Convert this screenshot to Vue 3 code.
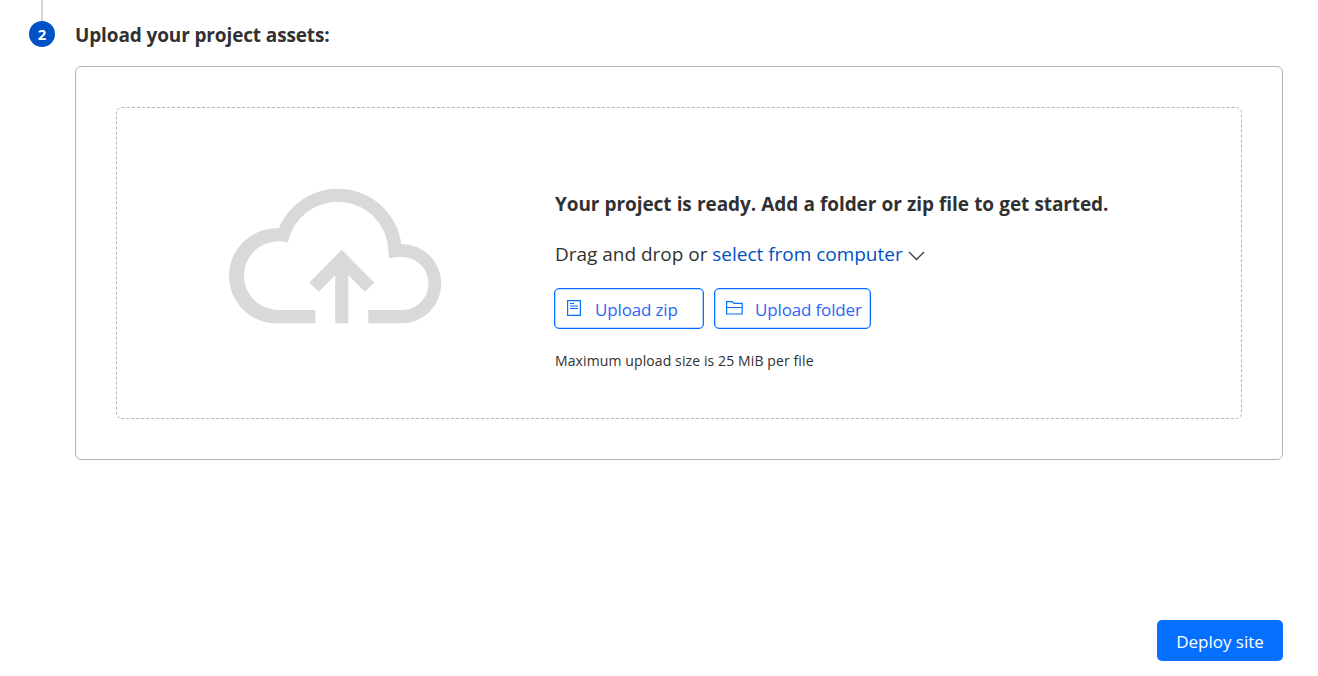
<script setup>
const headline = 'Your project is ready. Add a folder or zip file to get started.'
</script>

<template>
  <main class="page">
    <section class="step">
      <div class="rail">
        <span class="line"></span>
        <span class="badge">2</span>
      </div>
      <div class="body">
        <h2>Upload your project assets:</h2>
        <div class="panel">
          <div class="dropzone">
            <svg class="cloud" viewBox="229 188 213 136" width="213" height="136">
              <path d="M315.3 323.3H276.5A47.5 47.5 0 0 1 276.5 228.3L278.8 228.5A63.9 63.9 0 0 1 401.3 244A39.5 39.5 0 0 1 402 323.3H368.3V310H402A26.5 26.5 0 0 0 402 257Q395 257 389 258.3L388.5 252A50.75 50.75 0 0 0 288 242.5Q283 241.3 276.5 241.3A34.4 34.4 0 0 0 276.5 310H315.3Z" />
              <path d="M341.8 249.8L374.3 282.5L365 291.7L348.3 275.2V323.3H335.2V275.2L318.7 291.7L309.4 282.5Z" />
            </svg>
            <div class="info">
              <h3>{{ headline }}</h3>
              <p class="drag">
                <span>Drag and drop or <a>select from computer</a></span>
                <svg class="chev" width="17" height="10" viewBox="0 0 17 10"><path d="M1 1L8.5 8.5L16 1" /></svg>
              </p>
              <div class="buttons">
                <button class="outline zip">
                  <svg width="14" height="16" viewBox="0 0 14 16"><path d="M.6.6H13.4V15.4H.6ZM3 3.5H7M3 6H11M3 8.5H11" /></svg>
                  <span>Upload zip</span>
                </button>
                <button class="outline folder">
                  <svg width="17" height="15" viewBox="0 0 17 15"><path d="M.6 14V1.6H6.3L8 3.4H16.2V14ZM.6 7.5H16.2" /></svg>
                  <span>Upload folder</span>
                </button>
              </div>
              <p class="limit">Maximum upload size is 25 MiB per file</p>
            </div>
          </div>
        </div>
      </div>
    </section>
    <footer><button class="deploy">Deploy site</button></footer>
  </main>
</template>

<style>
body { background: #fff; }
</style>

<style scoped>
* { box-sizing: border-box; }
.page { width: 1318px; height: 676px; overflow: hidden; font-family: "Segoe UI", "Open Sans", "Noto Sans", sans-serif; color: #313131; }
h2, h3, p { margin: 0; white-space: nowrap; }
.step { display: flex; height: 460px; padding: 0 35px 0 29px; }
.rail { width: 46px; flex: none; }
.line { display: block; width: 2px; height: 21px; margin-left: 12px; background: #d5d7d8; }
.badge { display: block; width: 26px; height: 26px; border-radius: 50%; background: #0051c3; color: #fff; font-size: 15px; font-weight: 700; line-height: 27px; text-align: center; }
.body { flex: 1; min-width: 0; }
h2 { height: 66px; padding-top: 21px; font-size: 19px; line-height: 28px; letter-spacing: -.13px; }
.panel { height: 394px; padding: 40px; border: 1px solid #b6b6b6; border-radius: 6px; }
.dropzone { display: flex; height: 312px; border: 1px dashed #b6b6b6; border-radius: 6px; }
.cloud { flex: none; margin: 80px 112px 0; fill: #d9d9d9; }
.info { padding-top: 82px; }
h3 { padding-left: 1px; font-size: 19px; line-height: 28px; letter-spacing: -.1px; word-spacing: .45px; }
.drag { display: flex; margin-top: 22px; padding-left: 1px; font-size: 19px; line-height: 28px; letter-spacing: -.02px; }
.drag a { color: #0051c3; }
.chev { margin: 11px 0 0 5px; fill: none; stroke: #404040; stroke-width: 1.4; }
.buttons { display: flex; gap: 10px; margin-top: 20px; }
.outline { display: flex; height: 41px; padding: 0 0 0 12px; border: 1px solid #056fff; border-radius: 5px; background: #fff; color: #2b66f6; font: 17px/41px "Segoe UI", "Open Sans", "Noto Sans", sans-serif; letter-spacing: -.15px; white-space: nowrap; box-shadow: inset 0 0 0 .3px #056fff; }
.outline svg { flex: none; margin-top: 11px; fill: none; stroke: #056fff; stroke-width: 1.2; }
.zip { width: 150px; }
.zip span { margin-left: 14px; }
.folder { width: 157px; padding-left: 11px; }
.folder span { margin-left: 12px; }
.limit { margin-top: 22px; padding-left: 1px; font-size: 14px; line-height: 20px; letter-spacing: .11px; }
footer { display: flex; justify-content: flex-end; padding: 160px 35px 0 0; }
.deploy { width: 126px; height: 41px; padding: 0; border: 0; border-radius: 5px; background: #056fff; color: #fff; font: 17px/43px "Segoe UI", "Open Sans", "Noto Sans", sans-serif; }
</style>
